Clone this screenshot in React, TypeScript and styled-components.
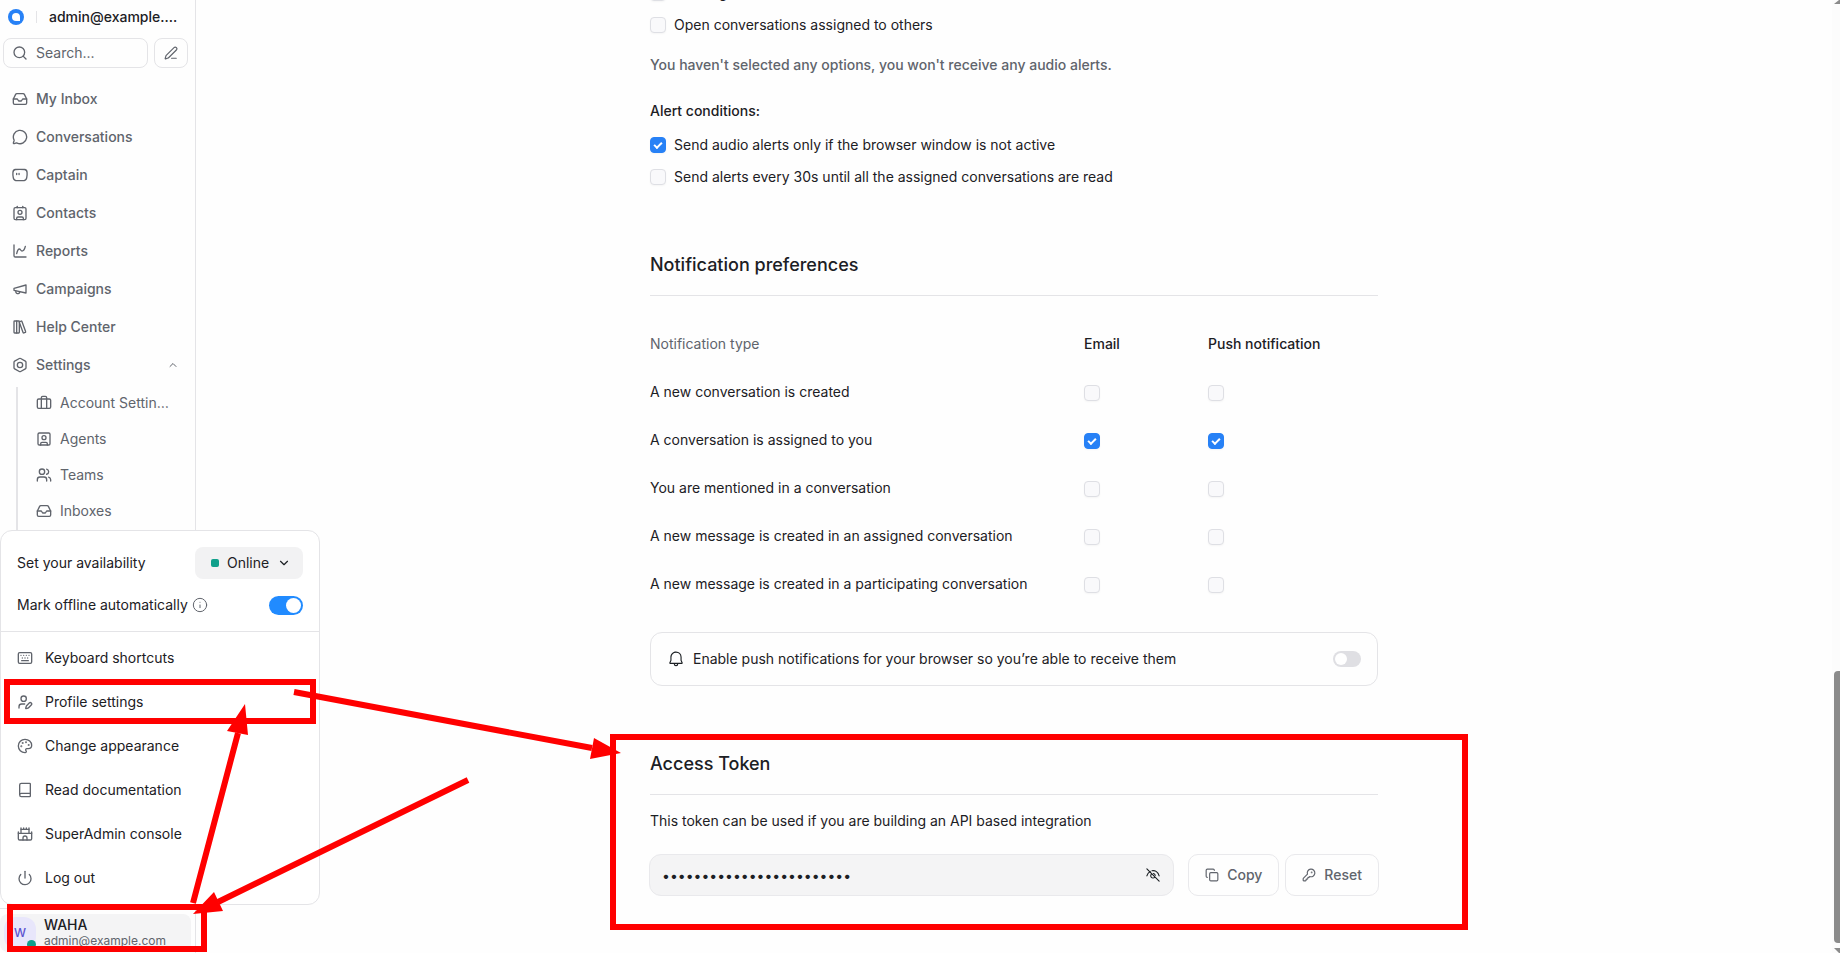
import React, { useId, useState } from "react";
import styled, { createGlobalStyle, css } from "styled-components";
import {
  Bolt,
  Book,
  Briefcase,
  Castle,
  ChartSpline,
  ChevronDown,
  ChevronUp,
  Contact,
  Copy,
  Inbox,
  Info,
  Keyboard,
  KeyRound,
  LibraryBig,
  MessageCircle,
  Palette,
  PenLine,
  Power,
  Search,
  SquareUser,
  UserPen,
  Users,
} from "lucide-react";

const color = {
  page: "#fefefe",
  ink: "#1c2024",
  muted: "#60646c",
  line: "#e4e4e7",
  softLine: "#e9e9ec",
  fill: "#f4f4f5",
  blue: "#2781f6",
  teal: "#10a08b",
  red: "#ff0000",
};

const GlobalStyle = createGlobalStyle`
  *, *::before, *::after { box-sizing: border-box; }
  body {
    margin: 0;
    background: ${color.page};
    color: ${color.ink};
    font-family: Inter, "Liberation Sans", sans-serif;
    font-size: 14px;
    line-height: 20px;
  }
  h2, h3, p, ul { margin: 0; padding: 0; }
  ul { list-style: none; }
  a { color: inherit; text-decoration: none; }
  button, input, select { font: inherit; color: inherit; }
  svg { flex-shrink: 0; }
`;

const Shell = styled.div`
  position: relative;
  display: flex;
  height: 100vh;
  overflow: hidden;
`;

/* Sidebar */

const Sidebar = styled.aside`
  display: flex;
  flex-direction: column;
  flex: 0 0 196px;
  min-width: 0;
  border-right: 1px solid ${color.line};
`;

const AccountBar = styled.div`
  display: flex;
  align-items: center;
  height: 34px;
  padding: 0 16px 0 8px;
`;

const AccountDivider = styled.span`
  width: 1px;
  height: 12px;
  margin: 0 12px;
  background: ${color.line};
`;

const AccountName = styled.span`
  flex: 1;
  min-width: 0;
  overflow: hidden;
  text-overflow: ellipsis;
  white-space: nowrap;
  font-weight: 500;
`;

const SearchBar = styled.div`
  display: flex;
  gap: 6px;
  margin-top: 4px;
  padding: 0 7px 0 3px;
  color: ${color.muted};
`;

const SearchBox = styled.label`
  display: flex;
  flex: 1;
  min-width: 0;
  align-items: center;
  gap: 8px;
  height: 30px;
  padding: 0 8px;
  border: 1px solid ${color.line};
  border-radius: 8px;
`;

const SearchInput = styled.input`
  width: 100%;
  min-width: 0;
  padding: 0;
  border: 0;
  outline: 0;
  background: none;
  &::placeholder { color: ${color.muted}; opacity: 1; }
`;

const ComposeButton = styled.button`
  display: flex;
  align-items: center;
  justify-content: center;
  width: 34px;
  height: 30px;
  padding: 0;
  border: 1px solid ${color.line};
  border-radius: 8px;
  background: none;
`;

const Nav = styled.nav`
  display: flex;
  flex-direction: column;
  flex: 1;
  gap: 6px;
  min-height: 0;
  overflow: hidden;
  margin-top: 15px;
`;

const NavLink = styled.a<{ $nested?: boolean }>`
  display: flex;
  flex-shrink: 0;
  align-items: center;
  gap: 8px;
  height: 32px;
  padding: 0 16px 0 12px;
  color: ${color.muted};
  font-weight: 500;
  ${(p) =>
    p.$nested &&
    css`
      padding: 0 26px 0 18px;
      font-weight: 400;
    `}
`;

const NavLabel = styled.span`
  flex: 1;
  min-width: 0;
  overflow: hidden;
  text-overflow: ellipsis;
  white-space: nowrap;
`;

const SubNav = styled.div`
  display: flex;
  flex: 1;
  flex-direction: column;
  gap: 4px;
  margin-left: 16px;
  border-left: 2px solid ${color.line};
`;

const SidebarFooter = styled.div`
  padding: 5px 4px 1px 0;
  border-top: 1px solid ${color.line};
`;

const ProfileButton = styled.button`
  display: flex;
  align-items: center;
  gap: 8px;
  width: 100%;
  padding: 3px 4px;
  border: 0;
  border-radius: 8px;
  background: ${color.fill};
  text-align: left;
`;

const Avatar = styled.span`
  position: relative;
  display: flex;
  align-items: center;
  justify-content: center;
  width: 32px;
  height: 32px;
  border-radius: 12px;
  background: #e8e6fb;
  color: #5b51d0;
  font-size: 12px;
  font-weight: 500;
`;

const Presence = styled.span`
  position: absolute;
  right: 0;
  bottom: 0;
  width: 9px;
  height: 9px;
  border-radius: 50%;
  background: ${color.teal};
`;

const ProfileText = styled.span`
  display: flex;
  flex-direction: column;
  line-height: 16px;
`;

const ProfileName = styled.span`
  font-weight: 500;
`;

const ProfileMail = styled.span`
  font-size: 12px;
  color: ${color.muted};
`;

/* Profile menu */

const Menu = styled.div`
  position: absolute;
  left: 0;
  bottom: 48px;
  width: 320px;
  border: 1px solid ${color.line};
  border-radius: 12px;
  background: #ffffff;
`;

const MenuTop = styled.div`
  display: flex;
  flex-direction: column;
  gap: 16px;
  padding: 16px;
  border-bottom: 1px solid ${color.line};
`;

const MenuRow = styled.div`
  display: flex;
  align-items: center;
  justify-content: space-between;
`;

const InlineLabel = styled.span`
  display: flex;
  align-items: center;
  gap: 4px;
  svg { color: ${color.muted}; }
`;

const StatusPicker = styled.span`
  display: flex;
  align-items: center;
  position: relative;
  width: 108px;
  height: 32px;
  border-radius: 8px;
  background: #f2f2f3;
`;

const StatusSelect = styled.select`
  appearance: none;
  width: 100%;
  height: 32px;
  padding: 0 32px;
  border: 0;
  border-radius: 8px;
  background: none;
`;

const StatusDot = styled.span`
  position: absolute;
  left: 16px;
  width: 8px;
  height: 8px;
  border-radius: 2px;
  background: ${color.teal};
`;

const StatusChevron = styled(ChevronDown)`
  position: absolute;
  right: 12px;
  pointer-events: none;
`;

const MenuList = styled.ul`
  padding: 4px 0;
`;

const MenuLink = styled.a`
  display: flex;
  align-items: center;
  gap: 12px;
  height: 44px;
  padding: 0 16px;
  svg { color: ${color.muted}; }
`;

/* Form controls */

const Toggle = styled.input<{ $small?: boolean }>`
  appearance: none;
  display: flex;
  align-items: center;
  flex-shrink: 0;
  width: ${(p) => (p.$small ? 28 : 34)}px;
  height: ${(p) => (p.$small ? 16 : 19)}px;
  margin: 0;
  padding: 2px;
  border-radius: 10px;
  background: #dfdfe3;
  &::after {
    content: "";
    width: ${(p) => (p.$small ? 12 : 15)}px;
    height: ${(p) => (p.$small ? 12 : 15)}px;
    border-radius: 50%;
    background: #ffffff;
  }
  &:checked { justify-content: flex-end; background: #218bff; }
`;

const Checkbox = styled.input`
  appearance: none;
  display: flex;
  align-items: center;
  justify-content: center;
  flex-shrink: 0;
  width: 16px;
  height: 16px;
  margin: 0;
  border: 1px solid #dedfe4;
  border-radius: 4px;
  background: #f9f9fb;
  box-shadow: 0 1px 2px rgba(0, 0, 0, 0.04);
  &:checked { border-color: ${color.blue}; background: ${color.blue}; }
  &:checked::after {
    content: "";
    width: 8px;
    height: 5px;
    margin-bottom: 2px;
    border: solid #ffffff;
    border-width: 0 0 2px 2px;
    transform: rotate(-45deg);
  }
`;

const CheckLabel = styled.label`
  display: flex;
  align-items: center;
  gap: 8px;
`;

/* Main content */

const Main = styled.main`
  display: flex;
  flex: 1;
  flex-direction: column;
  justify-content: flex-end;
  align-items: center;
  min-width: 0;
  padding: 0 24px 57px;
`;

const Content = styled.div`
  width: 100%;
  max-width: 728px;
  flex-shrink: 0;
`;

const CheckList = styled.div`
  display: flex;
  flex-direction: column;
  gap: 12px;
`;

const Hint = styled.p`
  margin: 20px 0 26px;
  color: ${color.muted};
  font-weight: 500;
`;

const Subheading = styled.h3`
  margin-bottom: 14px;
  font-size: 14px;
  font-weight: 500;
`;

const SectionTitle = styled.h2`
  padding-bottom: 18px;
  border-bottom: 1px solid ${color.line};
  font-size: 18px;
  line-height: 24px;
  font-weight: 500;
`;

const Section = styled.section<{ $gap: number }>`
  margin-top: ${(p) => p.$gap}px;
`;

const PrefTable = styled.table`
  width: 100%;
  margin-top: 24px;
  border-collapse: collapse;
  table-layout: fixed;
  th, td {
    height: 48px;
    padding: 0;
    text-align: left;
    font-weight: 400;
  }
  td { padding-top: 2px; }
  thead th { font-weight: 500; }
  thead th:first-child { color: ${color.muted}; font-weight: 400; }
`;

const TypeCol = styled.col`
  width: 434px;
`;

const EmailCol = styled.col`
  width: 124px;
`;

const PushCard = styled.label`
  display: flex;
  align-items: center;
  gap: 8px;
  margin-top: 24px;
  height: 54px;
  padding: 0 16px;
  border: 1px solid ${color.line};
  border-radius: 12px;
`;

const PushText = styled.span`
  flex: 1;
`;

const TokenText = styled.p`
  margin-top: 16px;
`;

const TokenRow = styled.div`
  display: flex;
  margin: 23px -1px 0;
  gap: 6px;
`;

const TokenField = styled.div`
  display: flex;
  flex: 1;
  align-items: center;
  height: 42px;
  margin-right: 8px;
  padding: 0 12px;
  border: 1px solid ${color.softLine};
  border-radius: 12px;
  background: ${color.fill};
`;

const TokenInput = styled.input`
  flex: 1;
  min-width: 0;
  padding: 2px 0 0;
  border: 0;
  outline: 0;
  background: none;
`;

const IconButton = styled.button`
  display: flex;
  padding: 0;
  border: 0;
  background: none;
`;

const OutlineButton = styled.button`
  display: flex;
  align-items: center;
  gap: 8px;
  height: 42px;
  padding: 0 16px;
  border: 1px solid ${color.softLine};
  border-radius: 10px;
  background: none;
  color: ${color.muted};
  font-weight: 500;
`;

/* Scroll bar */

const ScrollRail = styled.div`
  display: flex;
  flex: 0 0 8px;
  flex-direction: column;
  align-items: flex-end;
  background: #fcfcfc;
`;

const RailGap = styled.span`
  flex: 667;
`;

const RailThumb = styled.span`
  flex: 272;
  width: 6px;
  margin-bottom: 4px;
  border-radius: 4px 0 0 4px;
  background: #8b8b8b;
`;

const Annotations = styled.svg`
  position: absolute;
  inset: 0;
  width: 100%;
  height: 100%;
  pointer-events: none;
`;

/* Drawings */

const stroke = {
  fill: "none",
  stroke: "currentColor",
  strokeWidth: 2,
  strokeLinecap: "round" as const,
  strokeLinejoin: "round" as const,
};

const Logo = () => (
  <svg width="16" height="16" viewBox="0 0 16 16" aria-label="Chatwoot">
    <circle cx="8" cy="8" r="8" fill={color.blue} />
    <path d="M12 12H8a4 4 0 1 1 4-4z" fill="#ffffff" />
  </svg>
);

const CaptainIcon = () => (
  <svg width="16" height="16" viewBox="0 0 24 24" {...stroke}>
    <path d="M5 3.800Q12 3.200 19 3.800Q22.300 4.200 22.600 8Q22.900 12 22.100 16Q21.600 19.800 18.500 20.200Q12 20.800 5.500 20.200Q2.400 19.800 1.900 16Q1.100 12 1.400 8Q1.700 4.200 5 3.800z" />
    <path d="M7 9.600v1.800M10.600 9.600v1.800" />
  </svg>
);

const MegaphoneIcon = () => (
  <svg width="16" height="16" viewBox="0 0 24 24" {...stroke}>
    <path d="m3 11 18-5v12L3 14v-3z" />
    <path d="M11.600 16.800a3 3 0 1 1-5.800-1.600" />
  </svg>
);

const BellIcon = () => (
  <svg width="18" height="18" viewBox="0 0 24 24" fill="currentColor">
    <path d="M12 2a7.500 7.500 0 0 1 7.500 7.250v4.350l1.380 3.150a1.250 1.250 0 0 1-1.150 1.750H15a3 3 0 0 1-6 .180V18.500H4.280a1.250 1.250 0 0 1-1.150-1.750L4.500 13.600V9.500C4.500 5.350 7.850 2 12 2zm1.500 16.500h-3a1.500 1.500 0 0 0 3 .140zM12 3.500c-3.320 0-6 2.670-6 6v4.400L4.660 17h14.700L18 13.900V9.290A6 6 0 0 0 12 3.500z" />
  </svg>
);

const EyeOffIcon = () => (
  <svg width="16" height="16" viewBox="0 0 24 24" fill="none" stroke="currentColor" strokeWidth="1.700" strokeLinecap="round">
    <path d="M2.800 2.800 21.200 21.200" />
    <path d="M2.800 13.200C3.700 10 5.500 7.800 7.800 6.600" />
    <path d="M10.500 5.700C15.300 4.800 19.700 7.800 21.200 13.200" />
    <path d="M9.600 10.700a3.300 3.300 0 1 0 4.800 4.800" />
    <path d="M12.600 9.800a3.400 3.400 0 0 1 2.700 2.700" />
  </svg>
);

const mainLinks = [
  { label: "My Inbox", icon: <Inbox size={16} /> },
  { label: "Conversations", icon: <MessageCircle size={16} /> },
  { label: "Captain", icon: <CaptainIcon /> },
  { label: "Contacts", icon: <Contact size={16} /> },
  { label: "Reports", icon: <ChartSpline size={16} /> },
  { label: "Campaigns", icon: <MegaphoneIcon /> },
  { label: "Help Center", icon: <LibraryBig size={16} /> },
];

const settingsLinks = [
  { label: "Account Settings", icon: <Briefcase size={16} /> },
  { label: "Agents", icon: <SquareUser size={16} /> },
  { label: "Teams", icon: <Users size={16} /> },
  { label: "Inboxes", icon: <Inbox size={16} /> },
];

const menuLinks = [
  { label: "Keyboard shortcuts", icon: <Keyboard size={16} /> },
  { label: "Profile settings", icon: <UserPen size={16} /> },
  { label: "Change appearance", icon: <Palette size={16} /> },
  { label: "Read documentation", icon: <Book size={16} /> },
  { label: "SuperAdmin console", icon: <Castle size={16} /> },
  { label: "Log out", icon: <Power size={16} /> },
];

const notificationTypes = [
  { label: "A new conversation is created", on: false },
  { label: "A conversation is assigned to you", on: true },
  { label: "You are mentioned in a conversation", on: false },
  { label: "A new message is created in an assigned conversation", on: false },
  { label: "A new message is created in a participating conversation", on: false },
];

const CheckRow = ({ label, checked = false }: { label: string; checked?: boolean }) => {
  const id = useId();
  return (
    <CheckLabel htmlFor={id}>
      <Checkbox id={id} type="checkbox" defaultChecked={checked} />
      {label}
    </CheckLabel>
  );
};

export default function App() {
  const [masked, setMasked] = useState(true);

  return (
    <>
      <GlobalStyle />
      <Shell>
        <Sidebar>
          <AccountBar>
            <Logo />
            <AccountDivider />
            <AccountName>admin@example.com's Account</AccountName>
          </AccountBar>
          <SearchBar>
            <SearchBox>
              <Search size={16} />
              <SearchInput type="search" placeholder="Search..." aria-label="Search" />
            </SearchBox>
            <ComposeButton aria-label="New message">
              <PenLine size={14} />
            </ComposeButton>
          </SearchBar>
          <Nav>
            {mainLinks.map((link) => (
              <NavLink href="#" key={link.label}>
                {link.icon}
                <NavLabel>{link.label}</NavLabel>
              </NavLink>
            ))}
            <NavLink href="#">
              <Bolt size={16} />
              <NavLabel>Settings</NavLabel>
              <ChevronUp size={12} />
            </NavLink>
            <SubNav>
              {settingsLinks.map((link) => (
                <NavLink href="#" key={link.label} $nested>
                  {link.icon}
                  <NavLabel>{link.label}</NavLabel>
                </NavLink>
              ))}
            </SubNav>
          </Nav>
          <SidebarFooter>
            <ProfileButton>
              <Avatar>
                W
                <Presence />
              </Avatar>
              <ProfileText>
                <ProfileName>WAHA</ProfileName>
                <ProfileMail>admin@example.com</ProfileMail>
              </ProfileText>
            </ProfileButton>
          </SidebarFooter>
        </Sidebar>

        <Main>
          <Content>
            <CheckList>
              <CheckRow label="Unassigned conversations" />
              <CheckRow label="Open conversations assigned to others" />
            </CheckList>
            <Hint>You haven't selected any options, you won't receive any audio alerts.</Hint>
            <Subheading>Alert conditions:</Subheading>
            <CheckList>
              <CheckRow label="Send audio alerts only if the browser window is not active" checked />
              <CheckRow label="Send alerts every 30s until all the assigned conversations are read" />
            </CheckList>

            <Section $gap={66}>
              <SectionTitle>Notification preferences</SectionTitle>
              <PrefTable>
                <colgroup>
                  <TypeCol />
                  <EmailCol />
                  <col />
                </colgroup>
                <thead>
                  <tr>
                    <th scope="col">Notification type</th>
                    <th scope="col">Email</th>
                    <th scope="col">Push notification</th>
                  </tr>
                </thead>
                <tbody>
                  {notificationTypes.map((type) => (
                    <tr key={type.label}>
                      <th scope="row">{type.label}</th>
                      <td>
                        <Checkbox type="checkbox" defaultChecked={type.on} aria-label={`Email: ${type.label}`} />
                      </td>
                      <td>
                        <Checkbox type="checkbox" defaultChecked={type.on} aria-label={`Push: ${type.label}`} />
                      </td>
                    </tr>
                  ))}
                </tbody>
              </PrefTable>
              <PushCard>
                <BellIcon />
                <PushText>Enable push notifications for your browser so you’re able to receive them</PushText>
                <Toggle type="checkbox" role="switch" $small />
              </PushCard>
            </Section>

            <Section $gap={66}>
              <SectionTitle>Access Token</SectionTitle>
              <TokenText>This token can be used if you are building an API based integration</TokenText>
              <TokenRow>
                <TokenField>
                  <TokenInput
                    type={masked ? "password" : "text"}
                    defaultValue="abcdefghijklmnopqrstuvwx"
                    aria-label="Access token"
                    readOnly
                  />
                  <IconButton aria-label="Show token" onClick={() => setMasked(!masked)}>
                    <EyeOffIcon />
                  </IconButton>
                </TokenField>
                <OutlineButton>
                  <Copy size={14} />
                  Copy
                </OutlineButton>
                <OutlineButton>
                  <KeyRound size={14} />
                  Reset
                </OutlineButton>
              </TokenRow>
            </Section>
          </Content>
        </Main>

        <ScrollRail aria-hidden="true">
          <svg width="6" height="4" viewBox="0 0 6 4">
            <path d="M0 4 5 0H6V4z" fill="#8b8b8b" />
          </svg>
          <RailGap />
          <RailThumb />
          <svg width="6" height="6" viewBox="0 0 6 6">
            <path d="M0 1H6V6H5z" fill="#8b8b8b" />
          </svg>
        </ScrollRail>

        <Menu>
          <MenuTop>
            <MenuRow>
              <label htmlFor="availability">Set your availability</label>
              <StatusPicker>
                <StatusDot />
                <StatusSelect id="availability">
                  <option>Online</option>
                </StatusSelect>
                <StatusChevron size={14} />
              </StatusPicker>
            </MenuRow>
            <MenuRow>
              <InlineLabel>
                <label htmlFor="auto-offline">Mark offline automatically</label>
                <Info size={16} strokeWidth={1.5} />
              </InlineLabel>
              <Toggle id="auto-offline" type="checkbox" role="switch" defaultChecked />
            </MenuRow>
          </MenuTop>
          <MenuList>
            {menuLinks.map((link) => (
              <li key={link.label}>
                <MenuLink href="#">
                  {link.icon}
                  {link.label}
                </MenuLink>
              </li>
            ))}
          </MenuList>
        </Menu>

        <Annotations aria-hidden="true">
          <g fill="none" stroke={color.red} strokeWidth="6">
            <rect x="7" y="682" width="306" height="39" />
            <rect x="10" y="907" width="194" height="42" />
            <rect x="613" y="737" width="852" height="190" />
            <path d="M294 692 592 748M193 903 238 733M468 780 218 902" />
          </g>
          <path
            d="M621 753 594 738 590 759zM245 704 227 731 248 735zM193 914 214 892 223 911z"
            fill={color.red}
          />
        </Annotations>
      </Shell>
    </>
  );
}
